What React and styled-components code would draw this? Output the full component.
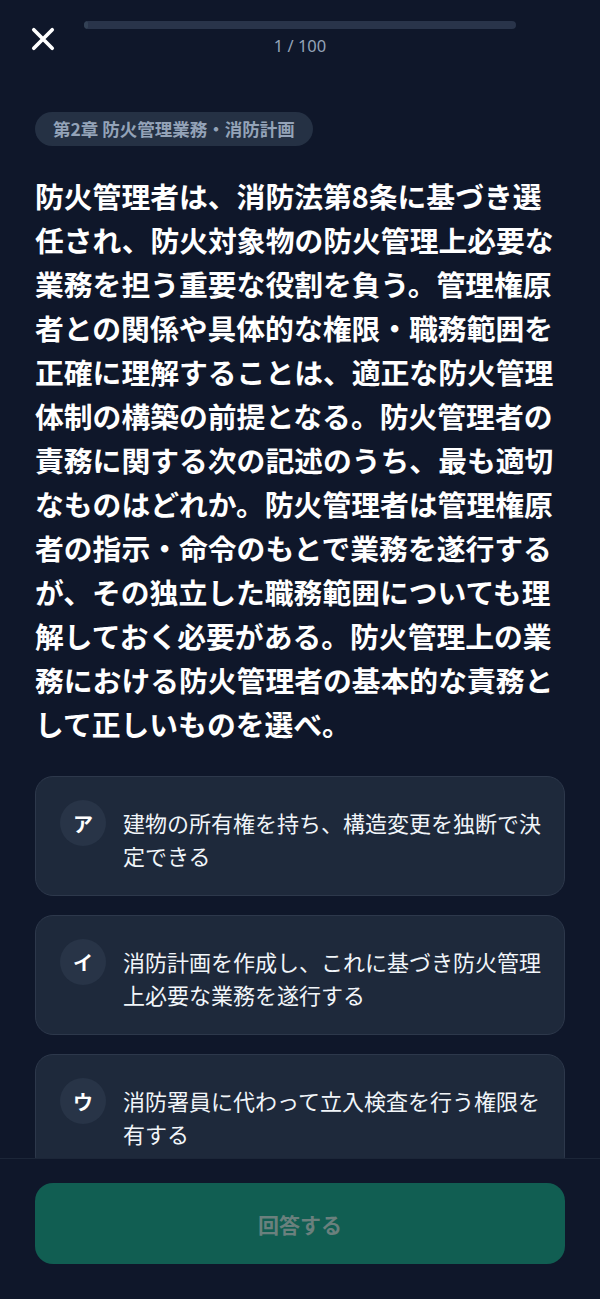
import React from "react";
import styled, { createGlobalStyle } from "styled-components";

const GlobalStyle = createGlobalStyle`
  html, body {
    margin: 0;
    padding: 0;
    background: #0f172a;
  }
  body {
    font-family: "Noto Sans CJK JP", "Noto Sans", sans-serif;
    -webkit-font-smoothing: antialiased;
  }
  * { box-sizing: border-box; }
`;

const Screen = styled.div`
  display: flex;
  flex-direction: column;
  height: 100vh;
  background: #0f172a;
  color: #f8fafc;
  overflow: hidden;
`;

const Header = styled.header`
  display: grid;
  grid-template-columns: 84px 1fr 84px;
  align-items: center;
  padding-top: 21px;
  height: 56px;
  flex-shrink: 0;
`;

const CloseButton = styled.button`
  justify-self: center;
  display: flex;
  align-items: center;
  justify-content: center;
  width: 32px;
  height: 32px;
  margin-left: 1px;
  padding: 0;
  border: none;
  background: transparent;
  color: #ffffff;
  cursor: pointer;
`;

const ProgressColumn = styled.div`
  display: flex;
  flex-direction: column;
  align-items: center;
  gap: 6px;
  align-self: start;
`;

const Track = styled.div`
  width: 100%;
  height: 8px;
  border-radius: 999px;
  background: #29344a;
  overflow: hidden;
`;

const Fill = styled.div`
  height: 100%;
  border-radius: 999px;
  background: #334155;
`;

const Counter = styled.div`
  font-family: "Noto Sans", "Noto Sans CJK JP", sans-serif;
  font-size: 16.5px;
  line-height: 22px;
  color: #94a3b8;
`;

const Main = styled.main`
  flex: 1;
  min-height: 0;
  overflow: hidden;
  padding: 56px 35px 0;
`;

const Chip = styled.div`
  display: inline-flex;
  align-items: center;
  height: 34px;
  padding: 0 18px;
  border-radius: 999px;
  background: #253144;
  color: #94a3b8;
  font-size: 17.5px;
  font-weight: 700;
  line-height: 24px;
`;

const Question = styled.h1`
  margin: 28px 0 30px;
  font-size: 28.8px;
  line-height: 44px;
  font-weight: 700;
  color: #ffffff;
`;

const Options = styled.div`
  display: flex;
  flex-direction: column;
  gap: 19px;
`;

const OptionCard = styled.button`
  display: flex;
  align-items: flex-start;
  gap: 17px;
  width: 100%;
  padding: 23px 20px 23px 24px;
  border: 1px solid #2d384b;
  border-radius: 18px;
  background: #1e293b;
  color: #f1f5f9;
  font-family: inherit;
  text-align: left;
  cursor: pointer;
`;

const Badge = styled.span`
  flex-shrink: 0;
  display: flex;
  align-items: center;
  justify-content: center;
  width: 46px;
  height: 46px;
  border-radius: 50%;
  background: #283447;
  color: #ffffff;
  font-size: 20px;
  font-weight: 700;
`;

const OptionText = styled.span`
  flex: 1;
  margin-top: 6px;
  font-size: 22px;
  line-height: 33px;
  font-weight: 400;
  color: #f1f5f9;
`;

const Footer = styled.footer`
  flex-shrink: 0;
  padding: 24px 35px 35px;
  border-top: 1px solid #1c2638;
  background: #0f172a;
`;

const SubmitButton = styled.button`
  display: flex;
  align-items: center;
  justify-content: center;
  width: 100%;
  height: 81px;
  border: none;
  border-radius: 18px;
  background: #115e52;
  color: #6a807d;
  font-family: inherit;
  font-size: 21px;
  font-weight: 700;
  cursor: not-allowed;
`;

const questionText =
  "防火管理者は、消防法第8条に基づき選任され、防火対象物の防火管理上必要な業務を担う重要な役割を負う。管理権原者との関係や具体的な権限・職務範囲を正確に理解することは、適正な防火管理体制の構築の前提となる。防火管理者の責務に関する次の記述のうち、最も適切なものはどれか。防火管理者は管理権原者の指示・命令のもとで業務を遂行するが、その独立した職務範囲についても理解しておく必要がある。防火管理上の業務における防火管理者の基本的な責務として正しいものを選べ。";

const options = [
  { key: "ア", text: "建物の所有権を持ち、構造変更を独断で決定できる" },
  { key: "イ", text: "消防計画を作成し、これに基づき防火管理上必要な業務を遂行する" },
  { key: "ウ", text: "消防署員に代わって立入検査を行う権限を有する" },
];

const current = 1;
const total = 100;

export default function App() {
  return (
    <>
      <GlobalStyle />
      <Screen>
        <Header>
          <CloseButton aria-label="閉じる">
            <svg width="26" height="26" viewBox="0 0 24 24" fill="none">
              <path
                d="M3.5 3.5 L20.5 20.5 M20.5 3.5 L3.5 20.5"
                stroke="currentColor"
                strokeWidth="3.4"
                strokeLinecap="round"
              />
            </svg>
          </CloseButton>
          <ProgressColumn>
            <Track>
              <Fill style={{ width: `${(current / total) * 100}%` }} />
            </Track>
            <Counter>
              {current} / {total}
            </Counter>
          </ProgressColumn>
          <span />
        </Header>
        <Main>
          <Chip>第2章 防火管理業務・消防計画</Chip>
          <Question>{questionText}</Question>
          <Options>
            {options.map((o) => (
              <OptionCard key={o.key}>
                <Badge>{o.key}</Badge>
                <OptionText>{o.text}</OptionText>
              </OptionCard>
            ))}
          </Options>
        </Main>
        <Footer>
          <SubmitButton disabled>回答する</SubmitButton>
        </Footer>
      </Screen>
    </>
  );
}
